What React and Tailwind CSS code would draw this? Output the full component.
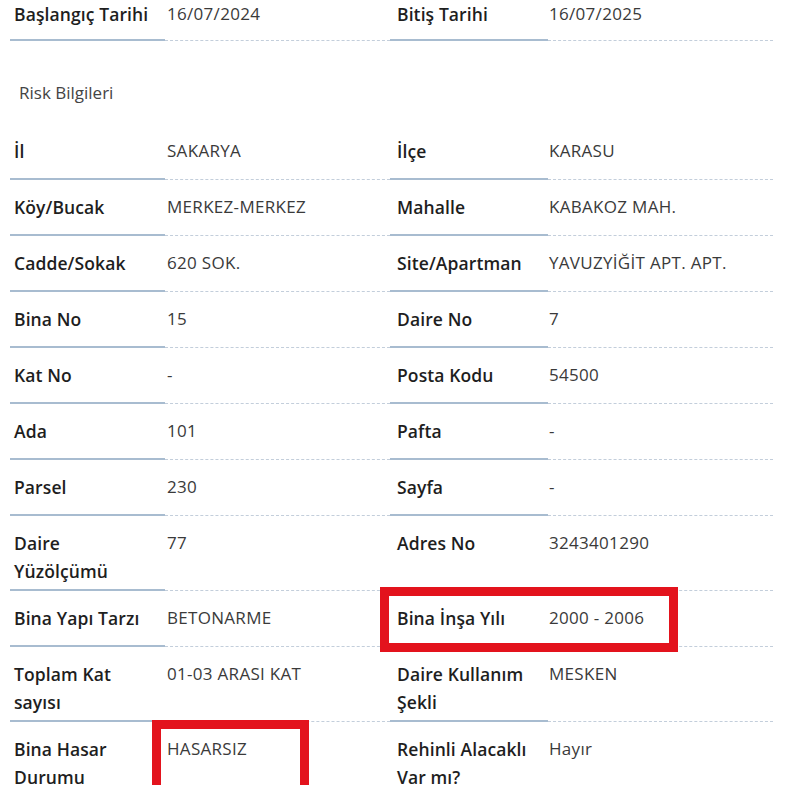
const rows = [
  ["İl", "SAKARYA", "İlçe", "KARASU"],
  ["Köy/Bucak", "MERKEZ-MERKEZ", "Mahalle", "KABAKOZ MAH."],
  ["Cadde/Sokak", "620 SOK.", "Site/Apartman", "YAVUZYİĞİT APT. APT."],
  ["Bina No", "15", "Daire No", "7"],
  ["Kat No", "-", "Posta Kodu", "54500"],
  ["Ada", "101", "Pafta", "-"],
  ["Parsel", "230", "Sayfa", "-"],
  ["Daire Yüzölçümü", "77", "Adres No", "3243401290"],
  ["Bina Yapı Tarzı", "BETONARME", "Bina İnşa Yılı", "2000 - 2006"],
  ["Toplam Kat sayısı", "01-03 ARASI KAT", "Daire Kullanım Şekli", "MESKEN"],
  ["Bina Hasar Durumu", "HASARSIZ", "Rehinli Alacaklı Var mı?", "Hayır"],
];

function Row({ cells, first }) {
  const pad = first ? "pt-0 h-[41px] whitespace-nowrap" : "pt-[13px] pb-[4px] min-h-[56px]";
  const label = `${pad} border-b-2 border-[#a8bcd0] font-semibold text-[17.5px] tracking-[0.1px] text-[#1e1e1e]`;
  const value = `${pad} border-b border-dashed border-[#c3cedb] text-[17px] tracking-[0.3px] text-[#3a3a3a]`;
  return (
    <div className="grid grid-cols-[155px_225px_158px_225px]">
      <div className={`${label} pl-[4px] pr-[18px]`}>{cells[0]}</div>
      <div className={`${value} pl-[2px]`}>{cells[1]}</div>
      <div className={`${label} pl-[7px] pr-[12px]`}>{cells[2]}</div>
      <div className={`${value} pl-[1px]`}>{cells[3]}</div>
    </div>
  );
}

export default function App() {
  return (
    <div
      className="relative h-[785px] w-[793px] overflow-hidden bg-white pl-[10px] leading-[28px]"
      style={{ fontFamily: '"Open Sans", "Noto Sans", sans-serif' }}
    >
      <Row first cells={["Başlangıç Tarihi", "16/07/2024", "Bitiş Tarihi", "16/07/2025"]} />

      <div className="h-[83px] pl-[9px] pt-[42px] text-[17px] leading-[20px] text-[#444]">
        Risk Bilgileri
      </div>

      {rows.map((r) => (
        <Row key={r[0]} cells={r} />
      ))}

      {/* red highlight boxes */}
      <div className="absolute left-[380px] top-[587px] h-[65px] w-[298px] border-[9px] border-[#e3131d]" />
      <div className="absolute left-[152px] top-[720px] h-[80px] w-[157px] border-[9px] border-[#e3131d]" />
    </div>
  );
}
